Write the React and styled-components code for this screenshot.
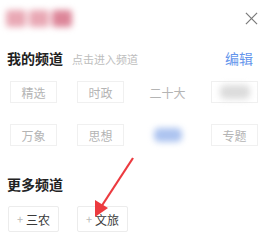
import { createGlobalStyle, styled } from "styled-components"

const Global = createGlobalStyle`
  body {
    margin: 0;
    background: #fff;
    font-family: "Noto Sans CJK SC", "Noto Sans", sans-serif;
  }
`

const myChannels = [
  { name: "精选" },
  { name: "时政" },
  { name: "二十大", plain: true },
  { blur: "#dcdcdc", w: 30 },
  { name: "万象" },
  { name: "思想" },
  { blur: "#adc4f0", w: 28, plain: true },
  { name: "专题" },
]

const moreChannels = ["三农", "文旅"]

export default function App() {
  return (
    <>
      <Global />
      <Page>
        <Header>
          <BlurTitle>
            <span />
            <span />
            <span />
          </BlurTitle>
          <Close viewBox="0 0 14 14">
            <path d="M1 1 L13 13 M13 1 L1 13" />
          </Close>
        </Header>

        <TitleRow>
          <Title>我的频道</Title>
          <Hint>点击进入频道</Hint>
          <Edit>编辑</Edit>
        </TitleRow>

        <ChannelGrid>
          {myChannels.map((c, i) => (
            <Chip key={i} $plain={c.plain}>
              {c.blur ? <Smudge $color={c.blur} $w={c.w} /> : c.name}
            </Chip>
          ))}
        </ChannelGrid>

        <MoreTitle>更多频道</MoreTitle>

        <MoreRow>
          {moreChannels.map((n) => (
            <AddChip key={n}>
              <Plus>+</Plus>
              {n}
            </AddChip>
          ))}
        </MoreRow>

        <Arrow viewBox="0 0 270 248">
          <line x1="133" y1="158" x2="101" y2="207" />
          <polygon points="95,217 95,200 108,208" />
        </Arrow>
      </Page>
    </>
  )
}

const Page = styled.div`
  position: relative;
  width: 270px;
  height: 248px;
  overflow: hidden;
  background: #fff;
`

const Header = styled.div`
  display: flex;
  align-items: center;
  justify-content: space-between;
  height: 36px;
  padding: 0 12px 0 6px;
`

const BlurTitle = styled.div`
  display: flex;
  gap: 3px;
  filter: blur(3px);
  span {
    width: 20px;
    height: 17px;
    background: #e9a9b5;
    border-radius: 3px;
  }
  span:last-child {
    background: #dd8699;
  }
`

const Close = styled.svg`
  width: 13px;
  height: 13px;
  path {
    stroke: #7a7a7a;
    stroke-width: 1.3;
    fill: none;
  }
`

const TitleRow = styled.div`
  display: flex;
  align-items: baseline;
  padding: 12px 17px 0 7px;
`

const Title = styled.div`
  font-size: 14px;
  font-weight: 700;
  color: #222;
`

const Hint = styled.div`
  margin-left: 9px;
  font-size: 11px;
  color: #bdbdbd;
`

const Edit = styled.div`
  margin-left: auto;
  font-size: 14px;
  color: #6595ec;
`

const ChannelGrid = styled.div`
  display: grid;
  grid-template-columns: repeat(4, 47px);
  column-gap: 20px;
  row-gap: 21px;
  padding: 13px 0 0 10px;
`

const Chip = styled.div`
  display: flex;
  align-items: center;
  justify-content: center;
  height: 22px;
  box-sizing: border-box;
  border: 1px solid ${(p) => (p.$plain ? "transparent" : "#f0f0f0")};
  font-size: 12px;
  color: #b4b4b4;
`

const Smudge = styled.span`
  width: ${(p) => p.$w}px;
  height: 14px;
  border-radius: 5px;
  background: ${(p) => p.$color};
  filter: blur(3px);
`

const MoreTitle = styled.div`
  padding: 28px 0 0 7px;
  font-size: 14px;
  font-weight: 700;
  color: #222;
`

const MoreRow = styled.div`
  display: flex;
  gap: 18px;
  padding: 12px 0 0 8px;
`

const AddChip = styled.div`
  display: flex;
  align-items: center;
  justify-content: center;
  width: 51px;
  height: 26px;
  box-sizing: border-box;
  border: 1px solid #ececec;
  border-radius: 2px;
  font-size: 12px;
  color: #3a3a3a;
`

const Plus = styled.span`
  margin-right: 3px;
  color: #b8b8b8;
  font-size: 11px;
`

const Arrow = styled.svg`
  position: absolute;
  left: 0;
  top: 0;
  width: 270px;
  height: 248px;
  pointer-events: none;
  line {
    stroke: #ec3a3f;
    stroke-width: 2.2;
  }
  polygon {
    fill: #ec3a3f;
  }
`
